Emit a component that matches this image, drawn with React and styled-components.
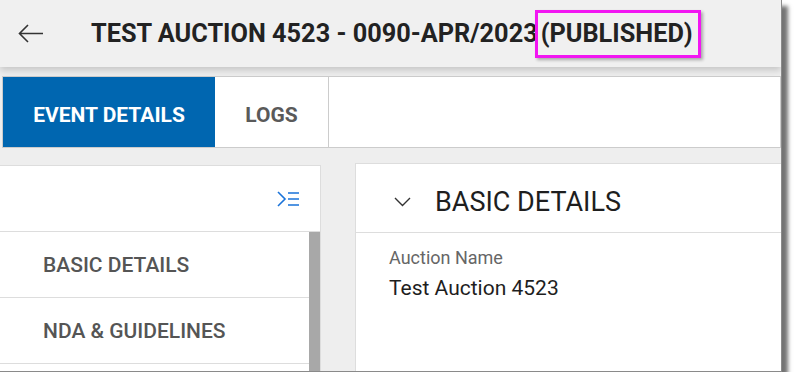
import React from 'react';
import styled, { createGlobalStyle } from 'styled-components';

const GlobalStyle = createGlobalStyle`
    body {
        margin: 0;
        background: #fff;
        font-family: Roboto, "Liberation Sans", sans-serif;
    }
`;

const Frame = styled.div`
    width: 782px;
    height: 372px;
    overflow: hidden;
    background: #eeeeee;
    border-right: 1px solid #8a8a8a;
    border-bottom: 1px solid #8a8a8a;
    box-sizing: border-box;
    box-shadow: 6px 6px 4px rgba(0, 0, 0, 0.55);
    display: flex;
    flex-direction: column;
`;

const Header = styled.header`
    height: 67px;
    flex-shrink: 0;
    display: flex;
    align-items: center;
    background: #f0f0f0;
    box-shadow: 0 3px 7px rgba(0, 0, 0, 0.18);
    position: relative;
    z-index: 1;
`;

const BackButton = styled.button`
    border: 0;
    background: none;
    padding: 0;
    margin: 0 47px 0 18px;
    display: flex;
    cursor: pointer;
`;

const Title = styled.h1`
    margin: 0;
    display: flex;
    align-items: center;
    font-size: 25.3px;
    font-weight: 700;
    color: #222;
    white-space: nowrap;
`;

const Highlight = styled.span`
    display: inline-flex;
    align-items: center;
    height: 42px;
    margin-left: -3px;
    padding: 0 5px 0 3px;
    border: 3px solid #f216f2;
    box-shadow: 2px 2px 3px rgba(0, 0, 0, 0.3);
`;

const TabBar = styled.nav`
    margin: 9px 0 0 2px;
    height: 72px;
    flex-shrink: 0;
    display: flex;
    background: #fff;
    border: 1px solid #cccccc;
    box-sizing: border-box;
`;

const Tab = styled.div`
    width: ${p => p.$width}px;
    display: flex;
    align-items: center;
    justify-content: center;
    padding-top: 6px;
    font-size: 21px;
    font-weight: 700;
    background: ${p => (p.$active ? '#0066b0' : '#fff')};
    color: ${p => (p.$active ? '#fff' : '#5a5a5a')};
    border-right: ${p => (p.$active ? 'none' : '1px solid #cccccc')};
`;

const Content = styled.main`
    flex: 1;
    display: flex;
    align-items: flex-start;
    padding-top: 15px;
    gap: 34px;
`;

const SideCard = styled.aside`
    width: 321px;
    margin-top: 2px;
    background: #fff;
    border-right: 1px solid #dddddd;
    border-top: 1px solid #dddddd;
    box-sizing: border-box;
`;

const SideHeader = styled.div`
    height: 65px;
    display: flex;
    align-items: center;
    justify-content: flex-end;
    padding-right: 20px;
    border-bottom: 1px solid #dddddd;
`;

const SideBody = styled.div`
    display: flex;
`;

const SideList = styled.ul`
    flex: 1;
    list-style: none;
    margin: 0;
    padding: 0;
`;

const SideItem = styled.li`
    height: 65px;
    display: flex;
    align-items: center;
    padding-left: 43px;
    border-bottom: 1px solid #dddddd;
    font-size: 21px;
    font-weight: 500;
    color: #555;
`;

const Scrollbar = styled.div`
    width: 11px;
    height: 150px;
    background: #a8a8a8;
`;

const MainCard = styled.section`
    flex: 1;
    height: 220px;
    background: #fff;
    border-left: 1px solid #dddddd;
    border-top: 1px solid #dddddd;
`;

const SectionHeader = styled.div`
    height: 69px;
    box-sizing: border-box;
    padding: 7px 0 0 38px;
    display: flex;
    align-items: center;
    gap: 24px;
    border-bottom: 1px solid #dddddd;
    font-size: 27px;
    color: #1e1e1e;
`;

const Field = styled.div`
    padding: 14px 0 0 33px;
`;

const FieldLabel = styled.div`
    font-size: 18px;
    color: #666;
    line-height: 22px;
`;

const FieldValue = styled.div`
    margin-top: 7px;
    font-size: 21px;
    color: #1e1e1e;
`;

const App = () => {
    return (
        <>
            <GlobalStyle />
            <Frame>
                <Header>
                    <BackButton aria-label="Back">
                        <svg width="26" height="19" viewBox="0 0 26 19" fill="none" stroke="#333" strokeWidth="1.6">
                            <path d="M25 9.5H1.5M10 1L1.5 9.5 10 18" />
                        </svg>
                    </BackButton>
                    <Title>
                        TEST AUCTION 4523 - 0090-APR/2023
                        <Highlight>(PUBLISHED)</Highlight>
                    </Title>
                </Header>
                <TabBar>
                    <Tab $active $width={212}>EVENT DETAILS</Tab>
                    <Tab $width={113}>LOGS</Tab>
                </TabBar>
                <Content>
                    <SideCard>
                        <SideHeader>
                            <svg width="23" height="16" viewBox="0 0 23 16" fill="none" stroke="#1a73d9" strokeWidth="1.6">
                                <path d="M1 1l7 7-7 7M11 2h11M11 8h11M11 14h11" />
                            </svg>
                        </SideHeader>
                        <SideBody>
                            <SideList>
                                <SideItem>BASIC DETAILS</SideItem>
                                <SideItem>NDA &amp; GUIDELINES</SideItem>
                            </SideList>
                            <Scrollbar />
                        </SideBody>
                    </SideCard>
                    <MainCard>
                        <SectionHeader>
                            <svg width="17" height="10" viewBox="0 0 17 10" fill="none" stroke="#333" strokeWidth="1.4">
                                <path d="M1 1l7.5 7.5L16 1" />
                            </svg>
                            BASIC DETAILS
                        </SectionHeader>
                        <Field>
                            <FieldLabel>Auction Name</FieldLabel>
                            <FieldValue>Test Auction 4523</FieldValue>
                        </Field>
                    </MainCard>
                </Content>
            </Frame>
        </>
    );
};

export default App;
